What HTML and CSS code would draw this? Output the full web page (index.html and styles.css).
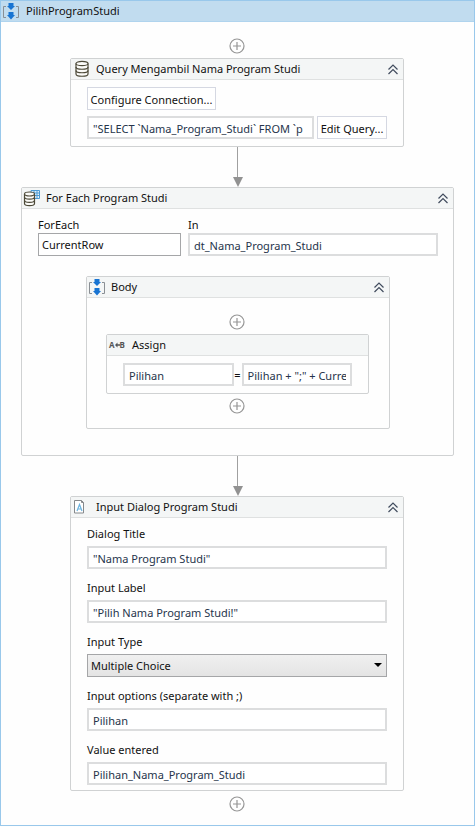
FILE: index.html
```html
<!DOCTYPE html>
<html lang="id">
<head>
<meta charset="utf-8">
<title>PilihProgramStudi</title>
<link rel="stylesheet" href="styles.css">
</head>
<body>
<svg class="defs" aria-hidden="true">
  <symbol id="sequence" viewBox="0 0 18 18">
    <path d="M4 4.500H1.500V15.500H4M14 4.500H16.500V15.500H14" fill="none" stroke="#8a8f94"/>
    <path d="M6.500 1h5v3h1.500L9 8 5 4h1.500zM6.500 10h5v3h1.500L9 17.500 5 13h1.500z" fill="#1874d2"/>
  </symbol>
  <symbol id="database" viewBox="0 0 18 18">
    <g fill="#fbfbf8" stroke="#4c4938" stroke-width="1.200">
      <path d="M3 3.500V14c0 3 12 3 12 0V3.500"/>
      <ellipse cx="9" cy="3.500" rx="6" ry="2.200"/>
      <path d="M3 7c0 3 12 3 12 0M3 10.500c0 3 12 3 12 0" fill="none"/>
    </g>
  </symbol>
  <symbol id="database-table" viewBox="0 0 18 18">
    <path d="M8 1.500h8.500v8H8zM8 4h9M8 6.500h9M11 1.500v8M14 1.500v8" fill="#e3f1fb" stroke="#4c9bd4"/>
    <g fill="#fbfbf8" stroke="#4c4938" stroke-width="1.200">
      <path d="M1.500 5v9.500c0 2.800 10 2.800 10 0V5"/>
      <ellipse cx="6.500" cy="5" rx="5" ry="2"/>
      <path d="M1.500 8c0 2.800 10 2.800 10 0M1.500 11.300c0 2.800 10 2.800 10 0" fill="none"/>
    </g>
  </symbol>
  <symbol id="dialog" viewBox="0 0 18 18">
    <path d="M1.500 2.500h7l2 2v10.500h-9z" fill="#fff" stroke="#85898c"/>
    <path d="M8.500 2.500v2h2" fill="none" stroke="#85898c"/>
    <path d="M4 13l2.500-6.500L9 13M5 11h3" fill="none" stroke="#6bb4e0" stroke-width="1.200"/>
  </symbol>
  <symbol id="collapse" viewBox="0 0 12 12">
    <path d="M1.500 6.500L6 2l4.500 4.500M1.500 11L6 6.500l4.500 4.500" fill="none" stroke="#414c5e" stroke-width="1.200"/>
  </symbol>
  <symbol id="plus" viewBox="0 0 16 16">
    <circle cx="8" cy="8" r="7" fill="#fff" stroke="#969696" stroke-width="1.200"/>
    <path d="M8 4v8M4 8h8" stroke="#969696" stroke-width="1.200"/>
  </symbol>
  <symbol id="arrow" viewBox="0 0 10 40">
    <path d="M4.500 0v32" stroke="#a0a0a0"/>
    <path d="M0 30h10L5 40z" fill="#929292"/>
  </symbol>
</svg>

<main class="workflow">
  <header class="title title-main">
    <svg class="icon"><use href="#sequence"/></svg>
    <h1>PilihProgramStudi</h1>
  </header>
  <div class="flow">
    <button class="add" aria-label="Add activity"><svg><use href="#plus"/></svg></button>

    <section class="card narrow">
      <header class="title">
        <svg class="icon"><use href="#database"/></svg>
        <h2>Query Mengambil Nama Program Studi</h2>
        <button class="collapse" aria-label="Collapse"><svg><use href="#collapse"/></svg></button>
      </header>
      <div class="query">
        <button class="push connection">Configure Connection...</button>
        <div class="query-row">
          <input class="box" aria-label="Query" value="&quot;SELECT `Nama_Program_Studi` FROM `p">
          <button class="push">Edit Query...</button>
        </div>
      </div>
    </section>

    <svg class="arrow"><use href="#arrow"/></svg>

    <section class="card">
      <header class="title">
        <svg class="icon"><use href="#database-table"/></svg>
        <h2>For Each Program Studi</h2>
        <button class="collapse" aria-label="Collapse"><svg><use href="#collapse"/></svg></button>
      </header>
      <div class="loop">
        <div class="loop-field">
          <label for="item">ForEach</label>
          <input class="box plain" id="item" value="CurrentRow">
        </div>
        <div class="loop-field">
          <label for="source">In</label>
          <input class="box" id="source" value="dt_Nama_Program_Studi">
        </div>
      </div>
      <section class="card loop-body">
        <header class="title">
          <svg class="icon"><use href="#sequence"/></svg>
          <h3>Body</h3>
          <button class="collapse" aria-label="Collapse"><svg><use href="#collapse"/></svg></button>
        </header>
        <div class="flow flow-inner">
          <button class="add" aria-label="Add activity"><svg><use href="#plus"/></svg></button>
          <section class="card">
            <header class="title">
              <span class="icon assign-icon">A<svg class="assign-arrow" viewBox="0 0 5 6"><path d="M0 3l2.500-2.500v5zM2 2.300h3v1.400H2z"/></svg>B</span>
              <h4>Assign</h4>
            </header>
            <div class="assign">
              <input class="box" aria-label="To" value="Pilihan">
              <span>=</span>
              <input class="box" aria-label="Value" value="Pilihan + &quot;;&quot; + CurrentRow">
            </div>
          </section>
          <button class="add" aria-label="Add activity"><svg><use href="#plus"/></svg></button>
        </div>
      </section>
    </section>

    <svg class="arrow"><use href="#arrow"/></svg>

    <section class="card narrow">
      <header class="title">
        <svg class="icon"><use href="#dialog"/></svg>
        <h2>Input Dialog Program Studi</h2>
        <button class="collapse" aria-label="Collapse"><svg><use href="#collapse"/></svg></button>
      </header>
      <div class="fields">
        <div class="field">
          <label for="title">Dialog Title</label>
          <input class="box" id="title" value="&quot;Nama Program Studi&quot;">
        </div>
        <div class="field">
          <label for="label">Input Label</label>
          <input class="box" id="label" value="&quot;Pilih Nama Program Studi!&quot;">
        </div>
        <div class="field">
          <label for="type">Input Type</label>
          <div class="select">
            <select id="type"><option>Multiple Choice</option></select>
          </div>
        </div>
        <div class="field">
          <label for="options">Input options (separate with ;)</label>
          <input class="box" id="options" value="Pilihan">
        </div>
        <div class="field">
          <label for="result">Value entered</label>
          <input class="box" id="result" value="Pilihan_Nama_Program_Studi">
        </div>
      </div>
    </section>
    <button class="add" aria-label="Add activity"><svg><use href="#plus"/></svg></button>
  </div>
</main>
</body>
</html>
```

FILE: styles.css
```css
* { box-sizing: border-box; }

body {
  margin: 0 1px 1px 0;
  background: #fefefe;
  color: #111;
  font: 11px/16px "Noto Sans", "Open Sans", sans-serif;
}

h1, h2, h3, h4 { margin: 0; font: inherit; }
button, input, select { font: inherit; color: inherit; margin: 0; }
svg { display: block; }
.defs { position: absolute; width: 0; height: 0; }

.workflow {
  border: 1px solid #99c8eb;
  background: #fefefe;
}

.title {
  display: flex;
  align-items: center;
  height: 21px;
  padding: 0 4px 0 1px;
  border-bottom: 1px solid #dfe1e1;
  background: #f4f6f6;
}
.title-main {
  background: #c1dcef;
  border-color: #b0d4ee;
}
.title-main h1 { flex: 1; }
.title h2, .title h3, .title h4 { flex: 1; white-space: nowrap; }
.icon { width: 18px; height: 18px; flex: none; margin-right: 5px; }
.title-main .icon { margin-right: 6px; }
.narrow .title { padding-left: 2px; }

.collapse {
  padding: 0;
  border: 0;
  background: none;
}
.collapse svg { width: 12px; height: 12px; }

.flow {
  display: flex;
  flex-direction: column;
  align-items: center;
  padding: 16px 20px 13px;
}
.flow-inner { padding: 16px 20px 14px 19px; }

.card {
  align-self: stretch;
  border: 1px solid #d0d2d3;
  border-radius: 2px;
  background: #fefefe;
}
.narrow { margin: 0 50px 0 49px; }

.add {
  padding: 0;
  border: 0;
  background: none;
  margin: 0 1px 4px 0;
}
.add svg { width: 16px; height: 16px; }
.card + .add { margin: 4px 1px 0 0; }
.narrow + .add { margin-top: 5px; }
.arrow { width: 10px; height: 40px; }

.box, .push, .select select {
  height: 23px;
  min-width: 0;
  width: 100%;
  border-radius: 0;
}
.box {
  padding: 2px 4px 0;
  border: 2px solid #dcddde;
  background: #fff;
  color: #26344b;
}
.plain {
  padding: 0 3px;
  border: 1px solid #a5a6a8;
  color: #111;
}
.push {
  padding: 2px 2px 0;
  border: 1px solid #d5d8e2;
  background: #fff;
  white-space: nowrap;
}

.query {
  display: grid;
  gap: 6px;
  padding: 7px 16px;
}
.connection { width: 129px; }
.query-row {
  display: grid;
  grid-template-columns: 1fr 70px;
  gap: 3px;
}

.loop {
  display: grid;
  grid-template-columns: 143fr 250fr;
  gap: 7px;
  padding: 8px 15px 0 16px;
}
.loop-field label, .field label { display: block; }
.loop-body { margin: 20px 63px 26px 64px; }

.assign {
  display: grid;
  grid-template-columns: 1fr 8px 1fr;
  align-items: center;
  text-align: center;
  padding: 7px 16px;
}

.title .assign-icon {
  display: flex;
  align-items: center;
  justify-content: center;
  margin-right: 6px;
  font-size: 8px;
  font-weight: 700;
  color: #555;
}
.assign-arrow {
  flex: none;
  width: 5px;
  height: 6px;
  fill: #555;
}

.fields {
  display: grid;
  gap: 11px;
  padding: 8px 16px 5px;
}
.field label { height: 20px; }

.select { position: relative; }
.select select {
  display: block;
  appearance: none;
  padding: 0 3px;
  border: 1px solid #a5a6a8;
  background: linear-gradient(#f0f0f0, #e4e4e4);
}
.select::after {
  content: "";
  position: absolute;
  right: 5px;
  top: 9px;
  border: 4px solid transparent;
  border-top-color: #000;
  border-bottom: 0;
  pointer-events: none;
}
```
